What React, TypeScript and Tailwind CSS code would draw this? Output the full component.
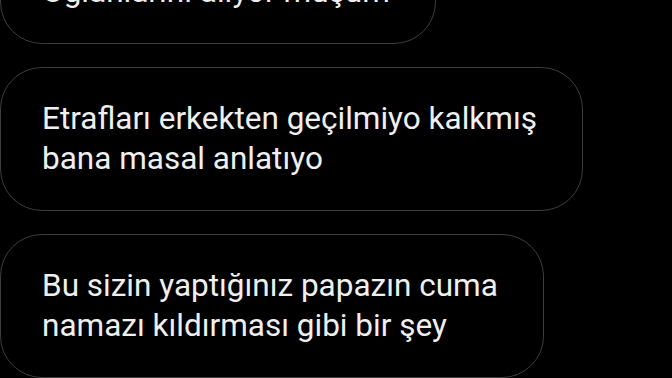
import React from 'react';

// ======================================================
// Chat bubbles (dark theme)
// ======================================================

interface BubbleProps {
  lines: string[];
}

const Bubble: React.FC<BubbleProps> = ({ lines }) => (
  <div className="self-start rounded-[42px] border-[1.5px] border-[#3d3d3d] bg-black pl-[41px] pr-[45px] py-[31px]">
    <p className="whitespace-nowrap text-[31.5px] leading-[40px] text-[#efefef] [font-family:Roboto,'Noto_Sans',sans-serif]">
      {lines.map((line, i) => (
        <React.Fragment key={i}>
          {i > 0 && <br />}
          {line}
        </React.Fragment>
      ))}
    </p>
  </div>
);

const messages: string[][] = [
  ['Oğlanlarını alıyor muşum'],
  ['Etrafları erkekten geçilmiyo kalkmış', 'bana masal anlatıyo'],
  ['Bu sizin yaptığınız papazın cuma', 'namazı kıldırması gibi bir şey'],
];

export default function App() {
  return (
    <div className="h-[378px] w-[672px] overflow-hidden bg-black">
      <div className="mt-[-60px] flex flex-col gap-[23px]">
        {messages.map((lines, i) => (
          <Bubble key={i} lines={lines} />
        ))}
      </div>
    </div>
  );
}
